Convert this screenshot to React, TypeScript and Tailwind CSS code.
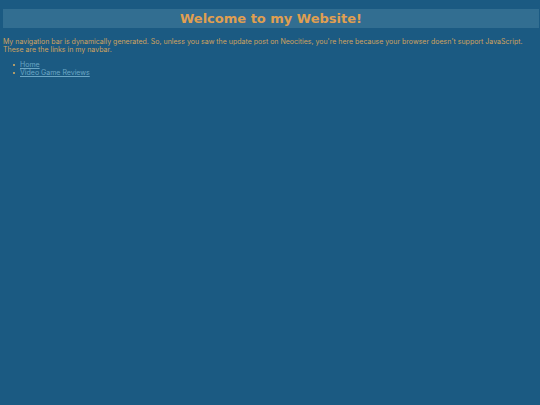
const links = [
  { label: "Home", href: "/" },
  { label: "Video Game Reviews", href: "/reviews" },
];

export default function App() {
  return (
    <div className="min-h-screen bg-[#1b5a82] pt-[9px] pr-px pl-[3px] font-['Inter','DejaVu_Sans',sans-serif] text-[7px] leading-2 text-[#cfa25f]">
      <h1 className="bg-[#326e91] text-center font-['DejaVu_Sans',sans-serif] text-[13px] leading-[19px] font-bold text-[#e09f50]">
        Welcome to my Website!
      </h1>

      <p className="mt-[10px]">
        My navigation bar is dynamically generated. So, unless you saw the
        update post on Neocities, you're here because your browser doesn't
        support JavaScript. These are the links in my navbar.
      </p>

      <ul className="mt-[7px] pl-[10px]">
        {links.map((link) => (
          <li
            key={link.href}
            className="flex items-center gap-[5px] before:size-[2px] before:rounded-full before:bg-[#e0b060]"
          >
            <a href={link.href} className="text-[#6ba6c4] underline">
              {link.label}
            </a>
          </li>
        ))}
      </ul>
    </div>
  );
}
